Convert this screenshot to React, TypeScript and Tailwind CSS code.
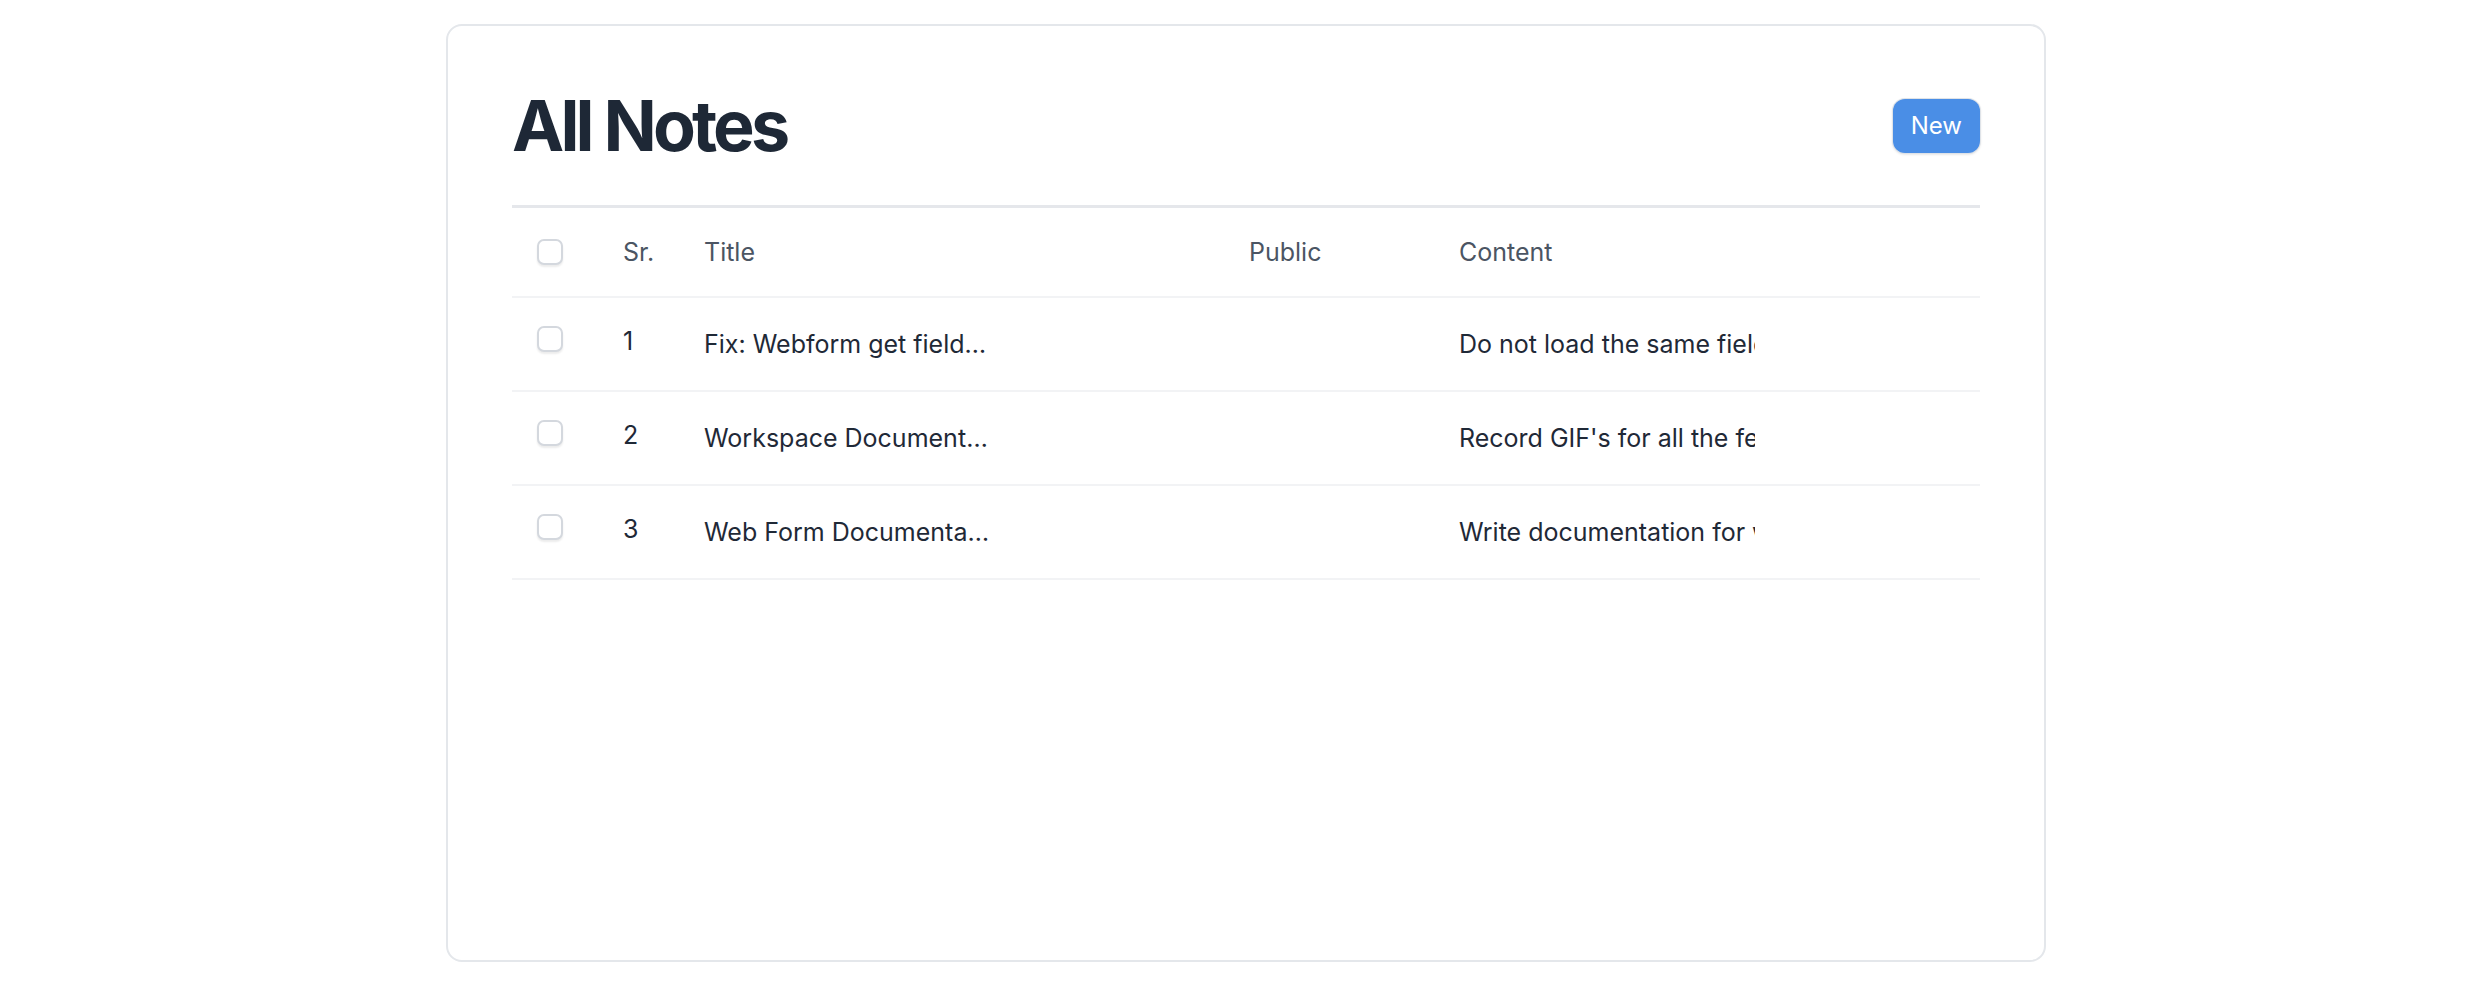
import React from 'react'

const notes = [
  { id: 1, title: 'Fix: Webform get fields for doctype', content: 'Do not load the same fields twice when the form reloads' },
  { id: 2, title: 'Workspace Documentation', content: "Record GIF's for all the features in workspace" },
  { id: 3, title: 'Web Form Documentation', content: 'Write documentation for web form builder' },
]

function Checkbox() {
  return (
    <span className="block w-[26px] h-[26px] rounded-[7px] border-2 border-[#d4d8de] bg-white shadow-[0_2px_2px_rgba(0,0,0,0.08)]" />
  )
}

export default function App() {
  return (
    <div className="min-h-screen bg-white pl-2 flex justify-center font-['Inter',sans-serif]">
      <div className="w-[1600px] h-[938px] mt-6 rounded-2xl border-2 border-[#e4e7eb] bg-white px-16 pt-16">
        {/* Header */}
        <div className="flex items-center justify-between pb-[43px] border-b-[3px] border-[#e5e7eb]">
          <h1 className="text-[70px] leading-[72px] font-bold tracking-[-0.055em] text-[#1e2836]">All Notes</h1>
          <button className="bg-[#4a8ee6] text-white text-2xl leading-9 px-[18px] py-[9px] rounded-xl shadow-[0_1px_3px_rgba(0,0,0,0.18)] ring-1 ring-[#dfe3e8]">
            New
          </button>
        </div>

        {/* Table */}
        <table className="w-full table-fixed text-left text-[25px] leading-9">
          <colgroup>
            <col className="w-[87px]" />
            <col className="w-[81px]" />
            <col className="w-[545px]" />
            <col className="w-[210px]" />
            <col />
          </colgroup>
          <thead className="text-[#4b5563]">
            <tr className="border-b-2 border-[#f2f3f5]">
              <th className="pl-[25px] py-[26px] font-normal">
                <div className="h-9 flex items-center"><Checkbox /></div>
              </th>
              <th className="pl-6 py-[26px] font-normal">Sr.</th>
              <th className="pl-6 py-[26px] font-normal">Title</th>
              <th className="pl-6 py-[26px] font-normal">Public</th>
              <th className="pl-6 py-[26px] font-normal">Content</th>
            </tr>
          </thead>
          <tbody className="text-[#1f2937]">
            {notes.map(n => (
              <tr key={n.id} className="border-b-2 border-[#f2f3f5]">
                <td className="pl-[25px] pt-7 pb-7 align-top"><Checkbox /></td>
                <td className="pl-6 pt-[25px] pb-7 align-top">{n.id}</td>
                <td className="pl-6 py-7 align-top">
                  <div className="w-[288px] truncate">{n.title}</div>
                </td>
                <td className="pl-6 py-7 align-top"></td>
                <td className="pl-6 py-7 align-top">
                  <div className="w-[296px] overflow-hidden whitespace-nowrap">{n.content}</div>
                </td>
              </tr>
            ))}
          </tbody>
        </table>
      </div>
    </div>
  )
}
